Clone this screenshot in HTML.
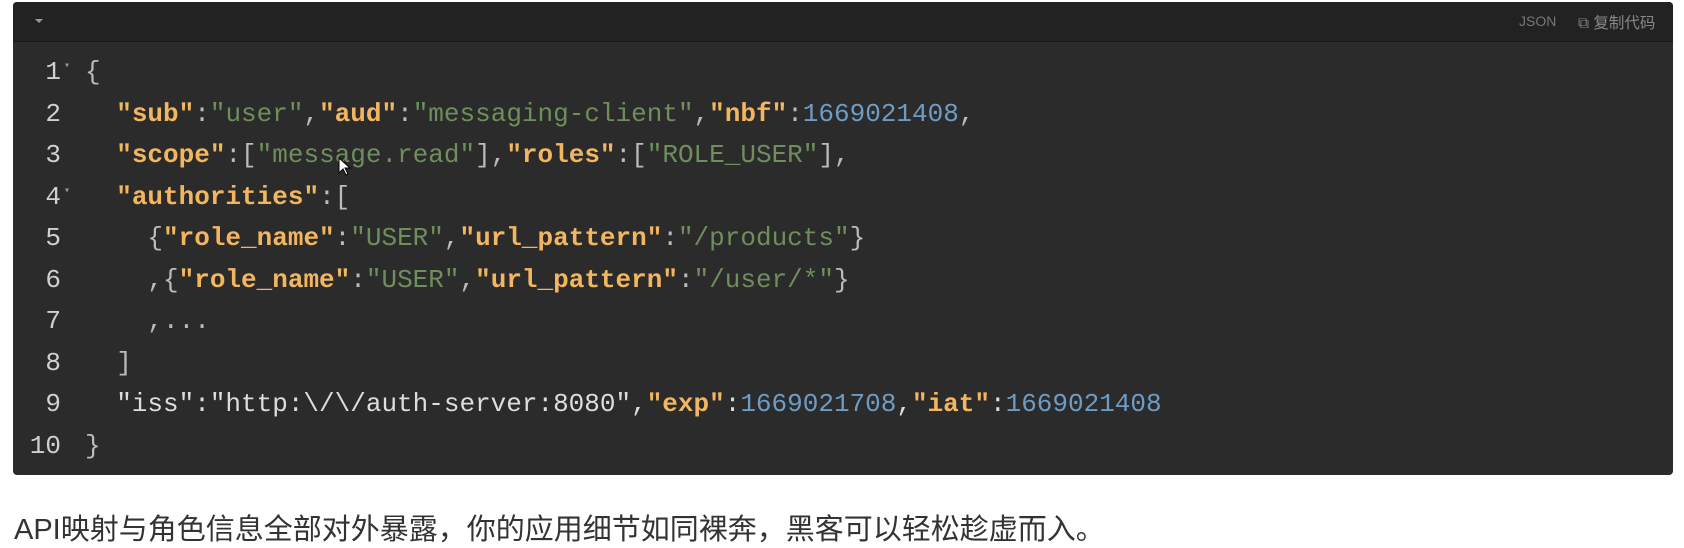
<!DOCTYPE html>
<html><head><meta charset="utf-8"><style>
html,body{margin:0;padding:0;background:#fff;width:1684px;height:548px;overflow:hidden;position:relative}
.box{position:absolute;left:13px;top:2px;width:1660px;height:473px;background:#2b2b2b;border-radius:4px;overflow:hidden}
.hdr{position:absolute;left:0;top:0;width:100%;height:39px;background:#222;border-bottom:1px solid #1a1a1a}
.tri{position:absolute;left:22px;top:17px;width:0;height:0;border-left:4px solid transparent;border-right:4px solid transparent;border-top:4px solid #999}
.json{position:absolute;left:1506px;top:11px;font:14px "Liberation Sans",sans-serif;color:#777}
.copy{position:absolute;left:1565px;top:9px;font:15.5px "Liberation Sans","Noto Sans CJK SC",sans-serif;color:#888}
.code{position:absolute;left:0;top:50px;font:26px "Liberation Mono",monospace;color:#bbb}
.ln{position:absolute;height:41.5px;line-height:41.5px;white-space:pre}
.n{position:absolute;width:48px;text-align:right;left:0;color:#d0d0d0}
.c{position:absolute;left:72px}
.k{color:#f2b660;font-weight:bold}
.s{color:#6f8e5c}
.d{color:#6d9cc5}
.f{position:absolute;left:51px;top:-6px;font-size:10px;color:#999}
.txt{position:absolute;left:14px;top:506px;font:29px "Liberation Sans","Noto Sans CJK SC",sans-serif;color:#333;white-space:nowrap}
</style></head><body>
<div class="box">
<div class="hdr"><div class="tri"></div><div class="json">JSON</div><div class="copy">⧉ 复制代码</div></div>
<div class="code">
<div class="ln" style="top:0"><span class="n">1</span><span class="f">▾</span><span class="c">{</span></div>
<div class="ln" style="top:41.5px"><span class="n">2</span><span class="c">  <span class="k">"sub"</span>:<span class="s">"user"</span>,<span class="k">"aud"</span>:<span class="s">"messaging-client"</span>,<span class="k">"nbf"</span>:<span class="d">1669021408</span>,</span></div>
<div class="ln" style="top:83px"><span class="n">3</span><span class="c">  <span class="k">"scope"</span>:[<span class="s">"message.read"</span>],<span class="k">"roles"</span>:[<span class="s">"ROLE_USER"</span>],</span></div>
<div class="ln" style="top:124.5px"><span class="n">4</span><span class="f">▾</span><span class="c">  <span class="k">"authorities"</span>:[</span></div>
<div class="ln" style="top:166px"><span class="n">5</span><span class="c">    {<span class="k">"role_name"</span>:<span class="s">"USER"</span>,<span class="k">"url_pattern"</span>:<span class="s">"/products"</span>}</span></div>
<div class="ln" style="top:207.5px"><span class="n">6</span><span class="c">    ,{<span class="k">"role_name"</span>:<span class="s">"USER"</span>,<span class="k">"url_pattern"</span>:<span class="s">"/user/*"</span>}</span></div>
<div class="ln" style="top:249px"><span class="n">7</span><span class="c">    ,...</span></div>
<div class="ln" style="top:290.5px"><span class="n">8</span><span class="c">  ]</span></div>
<div class="ln" style="top:332px"><span class="n">9</span><span class="c" style="color:#ddd">  "iss":"http:\/\/auth-server:8080",<span class="k">"exp"</span>:<span class="d">1669021708</span>,<span class="k">"iat"</span>:<span class="d">1669021408</span></span></div>
<div class="ln" style="top:373.5px"><span class="n">10</span><span class="c">}</span></div>
</div>
<svg style="position:absolute;left:325px;top:155px" width="14" height="20" viewBox="0 0 14 20"><path d="M1 1 L1 16 L5 12 L8 18 L10 17 L7 11 L12 11 Z" fill="#fff" stroke="#000" stroke-width="1"/></svg>
</div>
<div class="txt">API映射与角色信息全部对外暴露，你的应用细节如同裸奔，黑客可以轻松趁虚而入。</div>
</body></html>
